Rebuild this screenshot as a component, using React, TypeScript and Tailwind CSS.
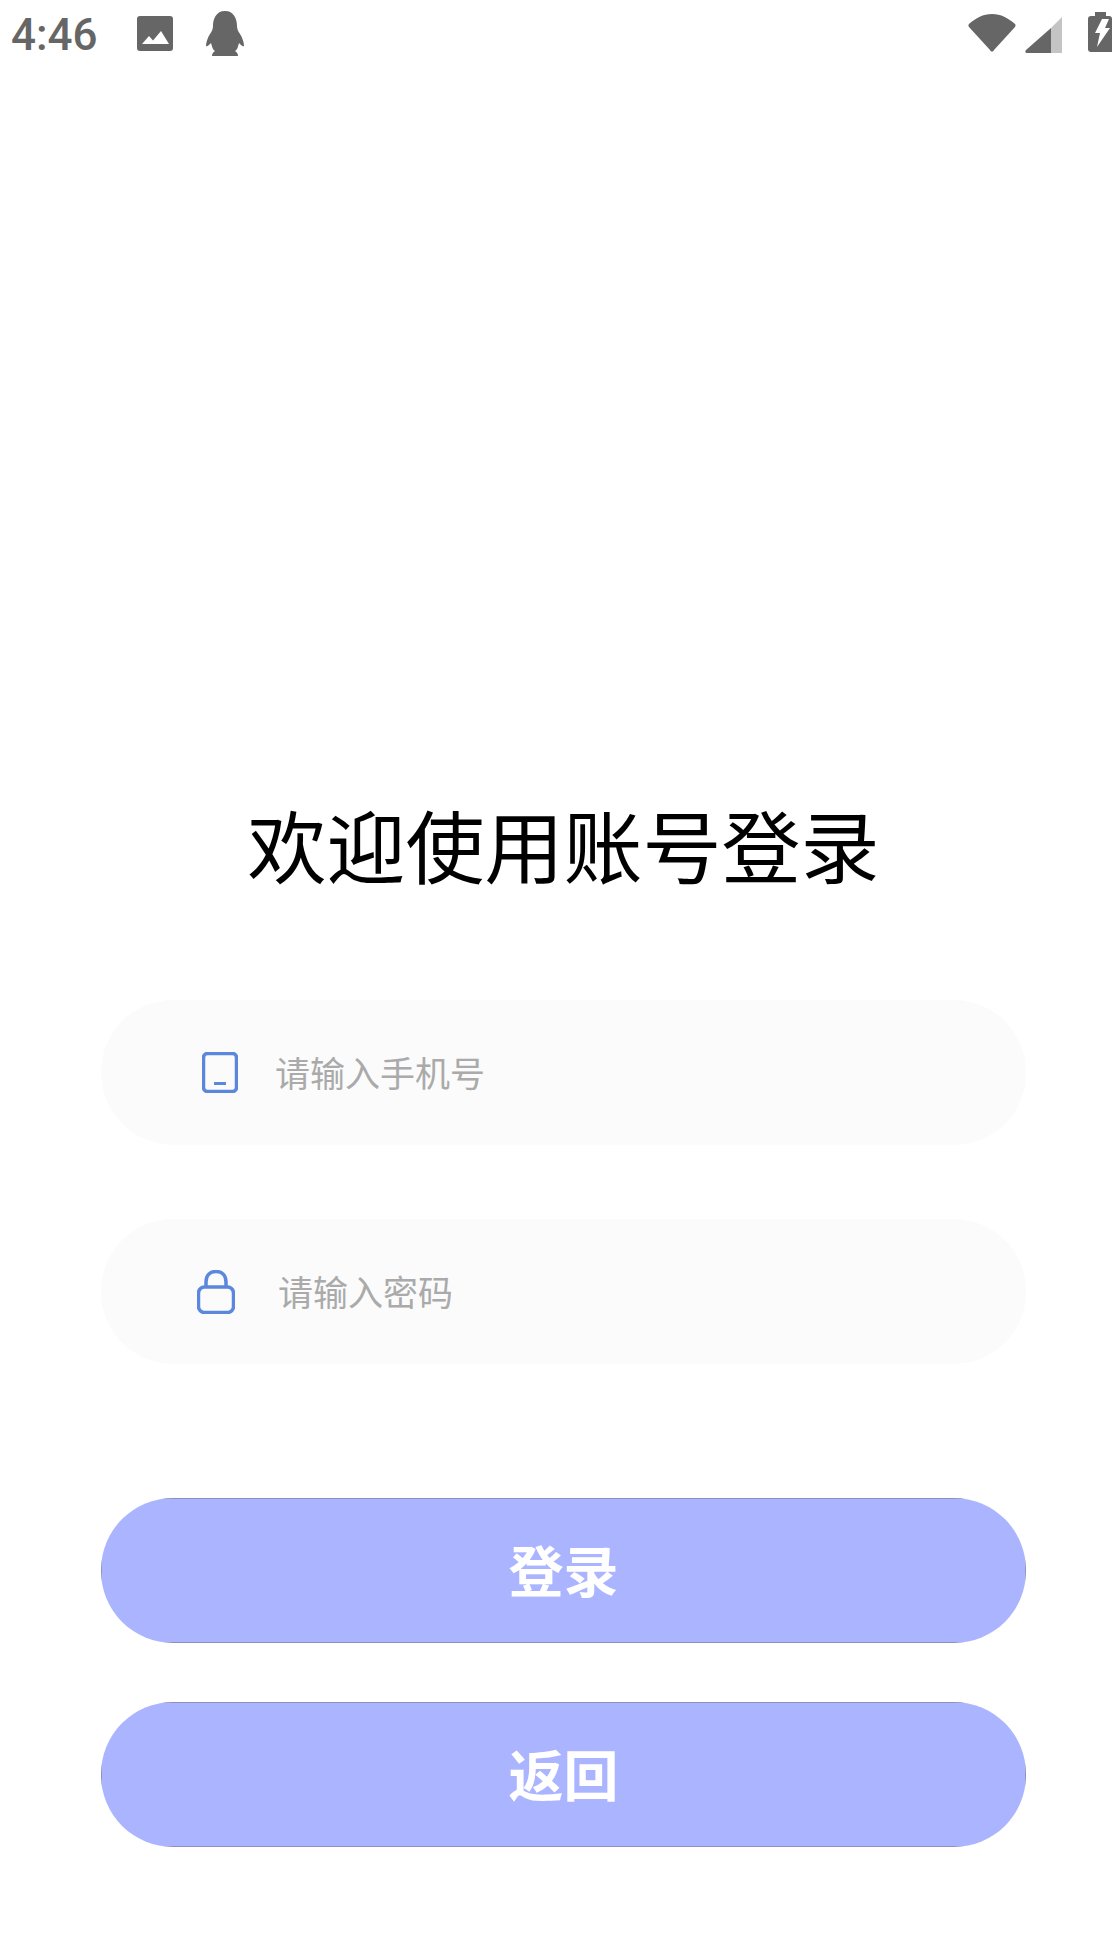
const FONT = "font-['Noto_Sans_CJK_SC','Noto_Sans',sans-serif]";

const StatusBar = () => (
  <div className="h-[70px] flex items-start text-[#666666]">
    <span className="ml-[11px] mt-[10px] w-[88px] text-[44px] leading-[50px] font-medium font-['Roboto',sans-serif]">
      4:46
    </span>
    <svg className="ml-[38px] mt-[16px]" width="36" height="36" viewBox="0 0 36 36">
      <rect width="36" height="35" rx="3" fill="#666666" />
      <path d="M5 28 L12 20 L16 24.5 L24 15 L32 28 Z" fill="#ffffff" />
    </svg>
    <svg className="ml-[32px] mt-[11px]" width="40" height="45" viewBox="0 0 40 45">
      <path
        d="M20 0 C29 0 32 8 32 15 C32 18 33 20 35 23 C37 26 39 31 39 35 C38 36 36 34 34 32 C33 36 32 39 30 40 C32 41 33 43 33 45 L7 45 C7 43 8 41 10 40 C8 39 7 36 6 32 C4 34 2 36 1 35 C1 31 3 26 5 23 C7 20 8 18 8 15 C8 8 11 0 20 0 Z"
        fill="#666666"
      />
    </svg>
    <div className="ml-auto flex items-start">
      <svg className="mt-[14px]" width="48" height="38" viewBox="0 0 48 38">
        <path
          d="M1 10 C8 4 15 0 24 0 C33 0 40 4 47 10 C48 11 47.5 12 47 13 L26 36 C25 38 23 38 22 36 L1 13 C0.5 12 0 11 1 10 Z"
          fill="#666666"
        />
      </svg>
      <svg className="ml-[9px] mt-[16px]" width="37" height="37" viewBox="0 0 37 37">
        <path d="M37 1 L37 37 L26 37 L26 12 Z" fill="#c4c4c4" />
        <path d="M26 12 L26 37 L2 37 C0 37 0 35 1 34 Z" fill="#666666" />
      </svg>
      <svg className="ml-[26px] mt-[12px]" width="24" height="40" viewBox="0 0 24 40">
        <path
          d="M7 0 H18 V4 H21 C23 4 24 5 24 7 V40 H3 C1 40 0 39 0 37 V7 C0 5 1 4 3 4 H7 Z"
          fill="#666666"
        />
        <path d="M14 7 H21 L17 16 H22 L9 35 L12 21 H7 Z" fill="#ffffff" />
      </svg>
    </div>
  </div>
);

const PhoneIcon = () => (
  <svg className="w-[36px] h-[41px]" viewBox="0 0 36 41" fill="none">
    <rect x="1.5" y="1.5" width="33" height="38" rx="4" stroke="#5b88dc" strokeWidth="3.5" />
    <path d="M12 31.5 H24" stroke="#5b88dc" strokeWidth="3" />
  </svg>
);

const LockIcon = () => (
  <svg className="w-[38px] h-[44px]" viewBox="0 0 38 44" fill="none">
    <path d="M9 17 V12 C9 5 13 1.5 19 1.5 C25 1.5 29 5 29 12 V17" stroke="#5b88dc" strokeWidth="3.5" />
    <rect x="1.5" y="17" width="35" height="25.5" rx="6" stroke="#5b88dc" strokeWidth="3.5" />
  </svg>
);

const Field = ({
  icon,
  label,
  className,
}: {
  icon: React.ReactNode;
  label: string;
  className: string;
}) => (
  <div className={`h-[145px] rounded-[72px] bg-[#fbfbfb] flex items-center ${className}`}>
    {icon}
    <span className="pb-[2px] text-[35px] leading-[48px] text-[#aaaaaa]">{label}</span>
  </div>
);

const ActionButton = ({ label, className }: { label: string; className: string }) => (
  <button
    className={`h-[145px] w-full pb-[5px] rounded-[72px] text-white text-[55px] font-bold bg-[linear-gradient(to_right,#8b91bb_1px,transparent_1px,transparent_924px,#8b91bb_924px),linear-gradient(to_bottom,#8b91bb_1px,#aab4ff_1px,#aab4ff_144px,#8b91bb_144px)] ${className}`}
  >
    {label}
  </button>
);

export default function App() {
  return (
    <div className={`w-[1112px] h-[1952px] bg-white overflow-hidden ${FONT}`}>
      <StatusBar />
      <div className="ml-[101px] w-[925px] flex flex-col">
        <h1 className="mt-[726px] text-center text-[79px] leading-[96px] font-normal text-black whitespace-nowrap">
          欢迎使用账号登录
        </h1>
        <Field
          className="mt-[108px] pl-[101px] gap-[37px]"
          icon={<PhoneIcon />}
          label="请输入手机号"
        />
        <Field
          className="mt-[74px] pl-[96px] gap-[43px]"
          icon={<LockIcon />}
          label="请输入密码"
        />
        <ActionButton className="mt-[134px]" label="登录" />
        <ActionButton className="mt-[59px]" label="返回" />
      </div>
    </div>
  );
}
